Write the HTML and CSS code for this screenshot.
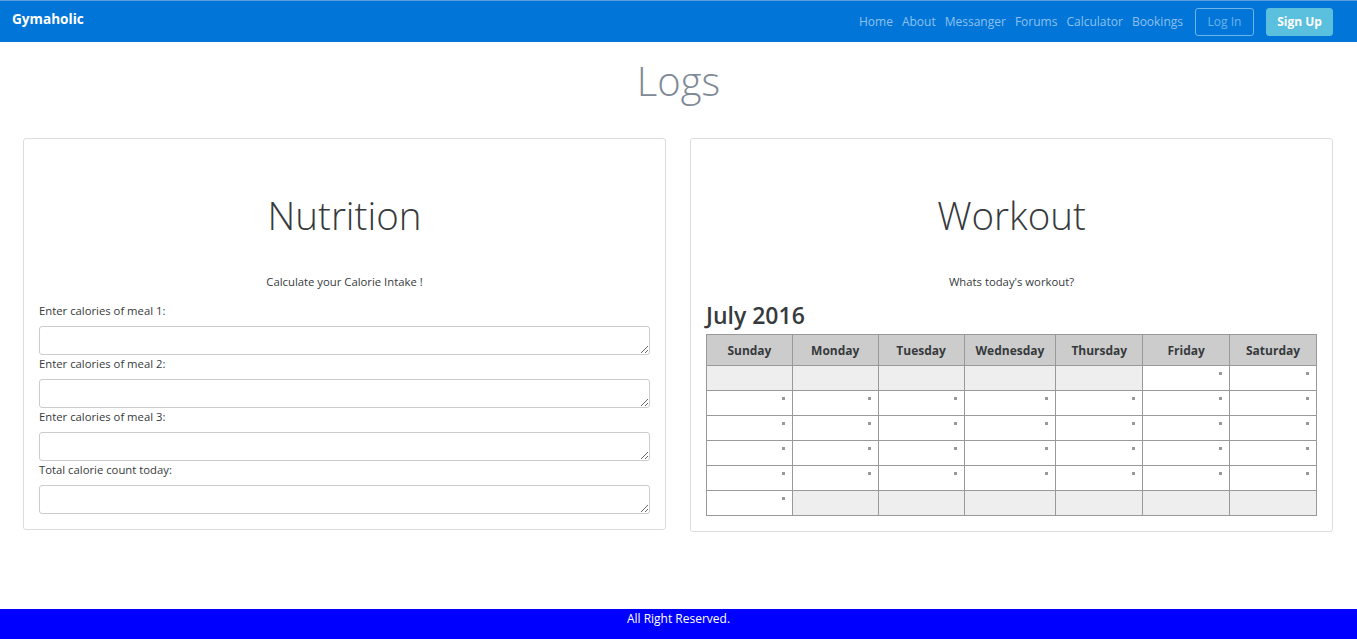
FILE: index.html
```html
<!DOCTYPE html>
<html>
<head>
<meta charset="utf-8">
<title>Gymaholic</title>
<link rel="stylesheet" href="styles.css">
</head>
<body>
<nav class="navbar">
  <a class="brand" href="#">Gymaholic</a>
  <div class="nav-right">
    <ul class="nav-links">
      <li><a href="#">Home</a></li>
      <li><a href="#">About</a></li>
      <li><a href="#">Messanger</a></li>
      <li><a href="#">Forums</a></li>
      <li><a href="#">Calculator</a></li>
      <li><a href="#">Bookings</a></li>
    </ul>
    <a class="btn btn-outline" href="#">Log In</a>
    <a class="btn btn-info" href="#">Sign Up</a>
  </div>
</nav>

<main class="page">
  <h1 class="page-title">Logs</h1>
  <div class="cards">
    <section class="card">
      <h2 class="card-title">Nutrition</h2>
      <p class="card-sub">Calculate your Calorie Intake !</p>
      <form class="meal-form">
        <label>Enter calories of meal 1:</label>
        <textarea></textarea>
        <label>Enter calories of meal 2:</label>
        <textarea></textarea>
        <label>Enter calories of meal 3:</label>
        <textarea></textarea>
        <label>Total calorie count today:</label>
        <textarea></textarea>
      </form>
    </section>
    <section class="card">
      <h2 class="card-title">Workout</h2>
      <p class="card-sub">Whats today's workout?</p>
      <h3 class="month">July 2016</h3>
      <table class="calendar">
        <colgroup>
          <col class="c-std"><col class="c-std"><col class="c-std"><col class="c-wide"><col class="c-mid"><col class="c-mid"><col class="c-mid">
        </colgroup>
        <thead>
          <tr><th>Sunday</th><th>Monday</th><th>Tuesday</th><th>Wednesday</th><th>Thursday</th><th>Friday</th><th>Saturday</th></tr>
        </thead>
        <tbody>
          <tr><td class="empty"></td><td class="empty"></td><td class="empty"></td><td class="empty"></td><td class="empty"></td><td class="day"><span class="dot"></span></td><td class="day"><span class="dot"></span></td></tr>
          <tr><td class="day"><span class="dot"></span></td><td class="day"><span class="dot"></span></td><td class="day"><span class="dot"></span></td><td class="day"><span class="dot"></span></td><td class="day"><span class="dot"></span></td><td class="day"><span class="dot"></span></td><td class="day"><span class="dot"></span></td></tr>
          <tr><td class="day"><span class="dot"></span></td><td class="day"><span class="dot"></span></td><td class="day"><span class="dot"></span></td><td class="day"><span class="dot"></span></td><td class="day"><span class="dot"></span></td><td class="day"><span class="dot"></span></td><td class="day"><span class="dot"></span></td></tr>
          <tr><td class="day"><span class="dot"></span></td><td class="day"><span class="dot"></span></td><td class="day"><span class="dot"></span></td><td class="day"><span class="dot"></span></td><td class="day"><span class="dot"></span></td><td class="day"><span class="dot"></span></td><td class="day"><span class="dot"></span></td></tr>
          <tr><td class="day"><span class="dot"></span></td><td class="day"><span class="dot"></span></td><td class="day"><span class="dot"></span></td><td class="day"><span class="dot"></span></td><td class="day"><span class="dot"></span></td><td class="day"><span class="dot"></span></td><td class="day"><span class="dot"></span></td></tr>
          <tr><td class="day"><span class="dot"></span></td><td class="empty"></td><td class="empty"></td><td class="empty"></td><td class="empty"></td><td class="empty"></td><td class="empty"></td></tr>
        </tbody>
      </table>
    </section>
  </div>
</main>

<footer class="footer">All Right Reserved.</footer>
</body>
</html>
```

FILE: styles.css
```css
* { box-sizing: border-box; }
html, body { height: 100%; }
body {
  margin: 0;
  font-family: "Open Sans", "Noto Sans", sans-serif;
  font-size: 11.3px;
  color: #373a3c;
  background: #fff;
  display: flex;
  flex-direction: column;
}
a { text-decoration: none; }

.navbar {
  height: 42px;
  background: #0275d8;
  border-top: 1px solid #5d9fe0;
  display: flex;
  align-items: center;
  justify-content: space-between;
  padding: 0 24px 0 12px;
}
.brand {
  color: #fff;
  font-weight: 700;
  font-size: 13.6px;
  margin-top: -6px;
}
.nav-right { display: flex; align-items: center; }
.nav-links {
  list-style: none;
  margin: 0;
  padding: 0;
  display: flex;
  gap: 9px;
}
.nav-links a { color: #8ec1ee; font-size: 12px; }
.btn {
  display: inline-flex;
  align-items: center;
  justify-content: center;
  height: 28px;
  border-radius: 3px;
  font-size: 12px;
}
.btn-outline {
  margin-left: 12px;
  width: 59px;
  border: 1px solid #6cb4ea;
  color: #6cb4ea;
}
.btn-info {
  margin-left: 12px;
  width: 67px;
  background: #5bc0de;
  border: 1px solid #5bc0de;
  color: #fff;
  font-weight: 700;
}

.page { flex: 1; }
.page-title {
  margin: 12px 0 30px;
  text-align: center;
  font-size: 40px;
  line-height: 54px;
  font-weight: 300;
  color: #7e8a96;
}
.cards {
  display: flex;
  gap: 24px;
  padding: 0 24px 0 23px;
  align-items: flex-start;
}
.card {
  flex: 1;
  border: 1px solid #ddd;
  border-radius: 3px;
  padding: 40px 15px 15px;
}
.card-title {
  margin: 6px 0 0;
  text-align: center;
  font-size: 38.5px;
  line-height: 60px;
  font-weight: 300;
  color: #373a3c;
}
.card-sub {
  margin: 28px 0 0;
  text-align: center;
  line-height: 18px;
}
.meal-form { margin-top: 11px; }
.meal-form label {
  display: block;
  line-height: 17px;
  margin-bottom: 7px;
}
.meal-form textarea {
  display: block;
  width: 100%;
  height: 29px;
  margin: 0;
  border: 1px solid #ccc;
  border-radius: 3px;
  resize: vertical;
}
.month {
  margin: 8px 0 3px;
  font-size: 23px;
  line-height: 32px;
  font-weight: 600;
  color: #373a3c;
}
.calendar {
  width: 100%;
  border-collapse: collapse;
  table-layout: fixed;
}
.c-std { width: 14.05%; }
.c-wide { width: 15.03%; }
.c-mid { width: 14.22%; }
.calendar th {
  background: #ccc;
  border: 1px solid #999;
  height: 31px;
  font-size: 12px;
  font-weight: 700;
  color: #373a3c;
}
.calendar td {
  border: 1px solid #999;
  height: 25px;
  padding: 0;
  vertical-align: top;
}
.calendar td.empty { background: #eee; }
.calendar td.day { text-align: right; }
.dot {
  display: inline-block;
  width: 3px;
  height: 3px;
  background: #999;
  margin: 6px 7px 0 0;
  vertical-align: top;
}

.footer {
  height: 30px;
  background: #0000ff;
  color: #fff;
  text-align: center;
  line-height: 20px;
  font-size: 12px;
}
```
